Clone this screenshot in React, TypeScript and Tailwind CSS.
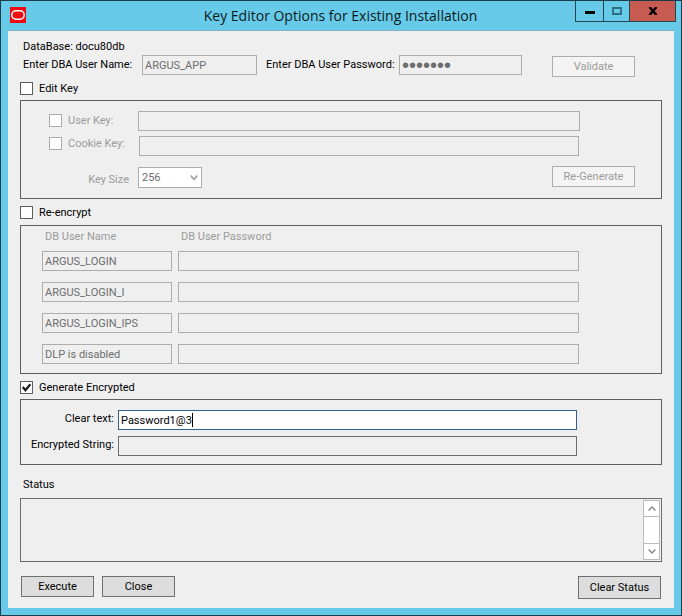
import { useState } from "react";
import type { InputHTMLAttributes, ButtonHTMLAttributes } from "react";
import clsx from "clsx";

const accounts = [
  { id: "login", name: "ARGUS_LOGIN" },
  { id: "login-i", name: "ARGUS_LOGIN_I" },
  { id: "login-ips", name: "ARGUS_LOGIN_IPS" },
  { id: "dlp", name: "DLP is disabled" },
];

const Field = ({ className, ...props }: InputHTMLAttributes<HTMLInputElement>) => (
  <input
    className={clsx(
      "h-5 min-w-0 border px-[2px] outline-none disabled:border-[#adadad] disabled:bg-[#efefef] disabled:text-[#6d6d6d]",
      className
    )}
    {...props}
  />
);

const PushButton = ({ className, ...props }: ButtonHTMLAttributes<HTMLButtonElement>) => (
  <button
    type="button"
    className={clsx(
      "border border-[#707070] bg-[#dddddd] disabled:border-[#adadad] disabled:bg-[#f4f4f4] disabled:text-[#9b9b9b]",
      className
    )}
    {...props}
  />
);

type TickProps = {
  label: string;
  checked?: boolean;
  disabled?: boolean;
  onChange?: (checked: boolean) => void;
};

const Tick = ({ label, checked = false, disabled, onChange }: TickProps) => (
  <label className={clsx("flex h-[13px] items-center gap-[6px]", disabled && "text-[#9b9b9b]")}>
    <span className="relative size-[13px] shrink-0">
      <input
        type="checkbox"
        checked={checked}
        disabled={disabled}
        onChange={(e) => onChange?.(e.target.checked)}
        className="block size-[13px] appearance-none border border-[#5c5c5c] bg-white disabled:border-[#adadad]"
      />
      {checked && (
        <svg viewBox="0 0 13 13" className="pointer-events-none absolute inset-0">
          <path d="M2.8 6 5.4 9.2 10.4 3.2" fill="none" stroke="#1c1c1c" strokeWidth="2.2" />
        </svg>
      )}
    </span>
    {label}
  </label>
);

const Logo = () => (
  <svg viewBox="0 0 16 16" className="size-4" aria-hidden="true">
    <rect width="16" height="16" fill="#f00a0f" />
    <rect x="1.8" y="3.8" width="12.4" height="8.4" rx="4.2" fill="none" stroke="#fff" strokeWidth="1.5" />
  </svg>
);

const TitleBar = () => (
  <header className="flex h-[29px] items-start justify-between pr-[5px] pl-[9px]">
    <div className="flex w-24 pt-[6px]">
      <Logo />
    </div>
    <h1 className="pt-1 font-['Open_Sans',sans-serif] text-[14px] leading-[22px] whitespace-nowrap text-[#0c1a20]">
      Key Editor Options for Existing Installation
    </h1>
    <div className="flex h-[21px] border border-t-0 border-[#24444f]">
      <button type="button" aria-label="Minimize" className="flex w-[27px] items-center justify-center">
        <svg viewBox="0 0 10 10" className="size-[10px]">
          <path d="M0 5h10v3H0z" fill="#000" />
        </svg>
      </button>
      <button
        type="button"
        aria-label="Maximize"
        className="flex w-[27px] items-center justify-center border-x border-[#24444f]"
      >
        <svg viewBox="0 0 10 8" className="h-2 w-[10px]">
          <path d="M1 1h8v6H1z" fill="none" stroke="#2d6d80" strokeWidth="1.8" />
        </svg>
      </button>
      <button type="button" aria-label="Close window" className="flex w-[45px] items-center justify-center bg-[#c75b51]">
        <svg viewBox="0 0 10 8" className="h-2 w-[10px]">
          <path d="M1.5 0 8.5 8M8.5 0 1.5 8" fill="none" stroke="#000" strokeWidth="2.4" />
        </svg>
      </button>
    </div>
  </header>
);

const App = () => {
  const [editKey, setEditKey] = useState(false);
  const [reEncrypt, setReEncrypt] = useState(false);
  const [generate, setGenerate] = useState(true);
  const [clearText, setClearText] = useState("Password1@3");

  return (
    <div className="min-h-screen border border-[#1b3c49] bg-[#68cae9] pb-[7px] font-[Roboto,sans-serif] text-[11px] leading-[14px] text-black">
      <TitleBar />

      <main className="mx-[7px] border-t border-[#7fb3c4] bg-[#efefef] px-3 pt-[9px] pb-[9px]">
        <p className="pl-[3px]">DataBase: docu80db</p>
        <div className="flex items-start pt-px pr-[27px] pl-[3px]">
          <label htmlFor="dba-user" className="w-[119px] shrink-0 pt-[3px] whitespace-nowrap">
            Enter DBA User Name:
          </label>
          <Field id="dba-user" className="w-[115px]" defaultValue="ARGUS_APP" disabled />
          <label htmlFor="dba-password" className="ml-[9px] w-[133px] shrink-0 pt-[3px] whitespace-nowrap">
            Enter DBA User Password:
          </label>
          <Field
            id="dba-password"
            type="password"
            className="w-[123px] font-['Liberation_Sans',sans-serif] text-[20px] leading-[18px]"
            defaultValue="docu80x"
            disabled
          />
          <PushButton className="mt-px ml-auto h-[21px] w-[83px]" disabled>
            Validate
          </PushButton>
        </div>

        <div className="pt-[5px]">
          <Tick label="Edit Key" checked={editKey} onChange={setEditKey} />
        </div>
        <section className="mt-[5px] border border-[#5f5f5f] pt-[10px] pr-[26px] pb-[10px] pl-7">
          <div className="flex items-start pr-[55px]">
            <div className="w-[89px] shrink-0 pt-[3px]">
              <Tick label="User Key:" disabled={!editKey} />
            </div>
            <Field aria-label="User Key" className="flex-1" disabled={!editKey} />
          </div>
          <div className="mt-[5px] flex items-start pr-14">
            <div className="w-[90px] shrink-0 pt-px">
              <Tick label="Cookie Key:" disabled={!editKey} />
            </div>
            <Field aria-label="Cookie Key" className="flex-1" disabled={!editKey} />
          </div>
          <div className="mt-[10px] flex items-start">
            <label htmlFor="key-size" className="w-[89px] pt-[7px] pr-[9px] text-right text-[#9b9b9b]">
              Key Size
            </label>
            <div className="relative mt-px">
              <select
                id="key-size"
                disabled={!editKey}
                className="block h-[21px] w-16 appearance-none border border-[#adadad] bg-white pl-[3px] opacity-100 disabled:text-[#6d6d6d]"
              >
                <option>256</option>
                <option>128</option>
              </select>
              <svg viewBox="0 0 8 6" className="pointer-events-none absolute top-[8px] right-1 h-[6px] w-2">
                <path d="M0.8 0.6 4 4.4 7.2 0.6" fill="none" stroke="#a8a8a8" strokeWidth="1.8" />
              </svg>
            </div>
            <PushButton className="ml-auto h-[21px] w-[83px]" disabled={!editKey}>
              Re-Generate
            </PushButton>
          </div>
        </section>

        <div className="pt-[7px]">
          <Tick label="Re-encrypt" checked={reEncrypt} onChange={setReEncrypt} />
        </div>
        <section className="mt-[6px] border border-[#5f5f5f] pt-1 pr-[82px] pb-[9px] pl-[21px]">
          <div className="flex pl-[3px] text-[#9b9b9b]">
            <p className="w-[136px]">DB User Name</p>
            <p>DB User Password</p>
          </div>
          <div className="mt-[7px] flex flex-col gap-[11px]">
            {accounts.map((account) => (
              <div key={account.id} className="flex gap-[6px]">
                <Field
                  aria-label="DB User Name"
                  className="w-[130px]"
                  defaultValue={account.name}
                  disabled={!reEncrypt}
                />
                <Field
                  aria-label={`Password for ${account.name}`}
                  type="password"
                  className="flex-1"
                  disabled={!reEncrypt}
                />
              </div>
            ))}
          </div>
        </section>

        <div className="pt-[7px]">
          <Tick label="Generate Encrypted" checked={generate} onChange={setGenerate} />
        </div>
        <section className="mt-[5px] flex flex-col gap-[6px] border border-[#5f5f5f] pt-[10px] pr-[84px] pb-2">
          <div className="flex items-start">
            <label htmlFor="clear-text" className="w-[97px] shrink-0 pt-[2px] pr-1 text-right">
              Clear text:
            </label>
            <div className="relative flex flex-1">
              <Field
                id="clear-text"
                className="flex-1 border-[#31608f] bg-white"
                value={clearText}
                disabled={!generate}
                onChange={(e) => setClearText(e.target.value)}
              />
              {clearText === "Password1@3" && (
                <span className="absolute top-[3px] left-[74px] h-[14px] w-px bg-black" />
              )}
            </div>
          </div>
          <div className="flex items-start">
            <label htmlFor="encrypted" className="w-[97px] shrink-0 pt-[2px] pr-1 text-right whitespace-nowrap">
              Encrypted String:
            </label>
            <Field id="encrypted" className="flex-1 border-[#6c6c6c] bg-[#efefef]" readOnly />
          </div>
        </section>

        <label htmlFor="status" className="mt-[13px] block pl-[3px]">
          Status
        </label>
        <div className="mt-[6px] flex h-16 border border-[#6c6c6c] p-px">
          <textarea id="status" readOnly className="flex-1 resize-none outline-none" />
          <div className="flex w-[17px] flex-col border border-[#bcbcbc] bg-white">
            <button type="button" aria-label="Scroll up" className="flex h-4 items-center justify-center border-b border-[#bcbcbc]">
              <svg viewBox="0 0 8 5" className="h-[5px] w-2">
                <path d="M0.6 4.4 4 1 7.4 4.4" fill="none" stroke="#858585" strokeWidth="1.4" />
              </svg>
            </button>
            <div className="flex-1" />
            <button type="button" aria-label="Scroll down" className="flex h-4 items-center justify-center border-t border-[#bcbcbc]">
              <svg viewBox="0 0 8 5" className="h-[5px] w-2">
                <path d="M0.6 0.6 4 4 7.4 0.6" fill="none" stroke="#858585" strokeWidth="1.4" />
              </svg>
            </button>
          </div>
        </div>

        <div className="mt-[14px] flex items-start gap-2 px-px">
          <PushButton className="h-[21px] w-[73px]">Execute</PushButton>
          <PushButton className="h-[21px] w-[73px]">Close</PushButton>
          <PushButton className="ml-auto h-[23px] w-[83px]">Clear Status</PushButton>
        </div>
      </main>
    </div>
  );
};

export default App;
